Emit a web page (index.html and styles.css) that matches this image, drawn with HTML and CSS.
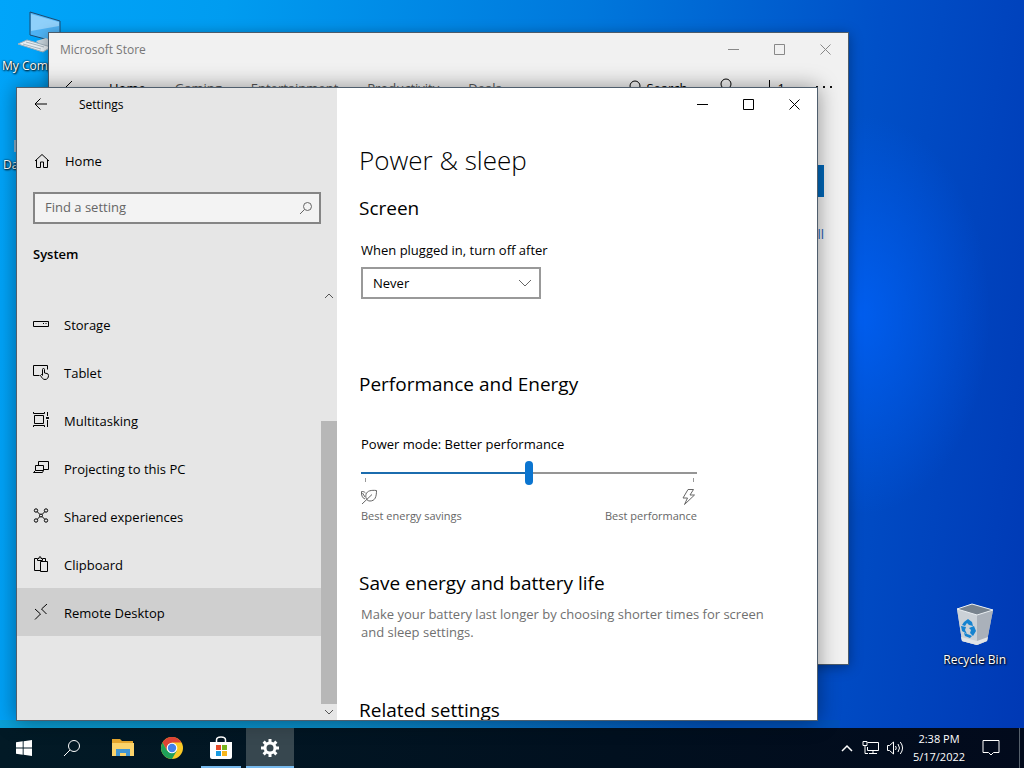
FILE: index.html
```html
<!DOCTYPE html>
<html lang="en">
<head>
<meta charset="UTF-8">
<meta name="viewport" content="width=device-width, initial-scale=1.0">
<title>Settings</title>
<link rel="stylesheet" href="styles.css">
</head>
<body>
<div class="desktop">

    <!-- desktop shortcuts -->
    <div class="shortcut my-computer">
        <svg width="48" height="44" viewBox="0 0 48 44">
            <path d="M14 1l30 9v22l-30-8z" fill="#4fb2f3" stroke="#1c4a70"/>
            <path d="M15 3l28 8v4L15 20z" fill="#8fd0fa"/>
            <path d="M20 30l10-3 8 4v6l-8 2z" fill="#c6d2da"/>
            <path d="M2 33l9-4 24 7-8 5z" fill="#e8eef2" stroke="#9fb0bc"/>
            <path d="M7 33l18 5M10 31l18 5" stroke="#a9b6bf"/>
        </svg>
        <span>My Computer</span>
    </div>
    <div class="shortcut data">
        <svg width="6" height="18" viewBox="0 0 6 18"><path d="M1 4h5v12H1z" fill="#8fb2cc"/></svg>
        <span>Data</span>
    </div>
    <div class="shortcut recycle">
        <svg width="40" height="44" viewBox="0 0 40 44">
            <path d="M2 6l15-5 21 6-6 31-10 4-15-4z" fill="#bfc6cd"/>
            <path d="M2 6l20 6v30L7 38z" fill="#cbd1d7"/>
            <path d="M22 12l16-5-6 31-10 4z" fill="#aab1ba"/>
            <path d="M2 6l15-5 21 6-16 5z" fill="#78838e" stroke="#e9eef2"/>
            <path d="M6 34l16 4 11-4-1 4-10 4-15-4z" fill="#e1e4e7"/>
            <g fill="#1583d0">
                <path d="M9 19l4-3 4 3 1 4-4-1-2-2-2 3-3-1z"/>
                <path d="M6 23l5 1-1 3 2 4-5-3z"/>
                <path d="M19 23l2 5-3 5-3-3 1-3-2-2z"/>
                <path d="M9 30l6 2 2 1-2 2-5-2z"/>
            </g>
        </svg>
        <span>Recycle Bin</span>
    </div>

    <!-- store window, behind -->
    <section class="window store">
        <header class="titlebar">
            <span class="store-title">Microsoft Store</span>
            <div class="controls">
                <button aria-label="Minimize"><svg width="11" height="11" viewBox="0 0 11 11"><path d="M0 5.500h11"/></svg></button>
                <button aria-label="Maximize"><svg width="11" height="11" viewBox="0 0 11 11"><path d="M.5.5h10v10H.5z"/></svg></button>
                <button aria-label="Close"><svg width="11" height="11" viewBox="0 0 11 11"><path d="M.5.5l10 10M10.500.5l-10 10"/></svg></button>
            </div>
        </header>
        <nav class="store-nav">
            <button class="store-back" aria-label="Back"><svg width="16" height="16" viewBox="0 0 16 16"><path d="M9 1L2 8l7 7M2 8h13"/></svg></button>
            <a href="#" class="on">Home</a>
            <a href="#">Gaming</a>
            <a href="#">Entertainment</a>
            <a href="#">Productivity</a>
            <a href="#">Deals</a>
            <div class="store-tools">
                <button><svg width="16" height="16" viewBox="0 0 16 16"><circle cx="9" cy="6" r="5"/><path d="M5 10l-4 5"/></svg>Search</button>
                <button aria-label="Account"><svg width="16" height="20" viewBox="0 0 16 20"><circle cx="8" cy="6" r="5"/><path d="M1 19c0-10 14-10 14 0"/></svg></button>
                <button aria-label="Downloads"><svg width="10" height="16" viewBox="0 0 10 16"><path d="M5.500 0v12M1 8l4 4 4-4"/></svg>1</button>
                <button aria-label="More"><svg width="18" height="4" viewBox="0 0 18 4"><path d="M1 0h2v2H1zM8 0h2v2H8zM15 0h2v2h-2z" fill="#111" stroke="none"/></svg></button>
            </div>
        </nav>
        <div class="store-body">
            <button class="store-buy">Get</button>
            <a href="#">Show all</a>
        </div>
    </section>

    <!-- settings window -->
    <section class="window settings">
        <aside class="sidebar">
            <header class="titlebar">
                <button class="back" aria-label="Back"><svg width="14" height="14" viewBox="0 0 14 14"><path d="M6.500 1.500L1 7l5.500 5.500M1 7h12"/></svg></button>
                <span>Settings</span>
            </header>
            <a href="#" class="item home">
                <svg width="16" height="16" viewBox="0 0 16 16"><path d="M1 8l7-6.500L15 8M2.500 7v7.500h4V9h3v5.500h4V7"/></svg>
                Home
            </a>
            <form class="search">
                <input type="text" placeholder="Find a setting" aria-label="Find a setting">
                <svg width="14" height="14" viewBox="0 0 14 14"><circle cx="8.500" cy="5.500" r="4"/><path d="M5.500 8.500L1 13"/></svg>
            </form>
            <h2>System</h2>
            <div class="scroller">
                <nav class="list">
                    <a href="#" class="item">
                        <svg width="16" height="16" viewBox="0 0 16 16"><path d="M.5 5.500h15v5H.5z"/><path d="M10 7.500h1M12.500 7.500h1"/></svg>
                        Storage
                    </a>
                    <a href="#" class="item">
                        <svg width="16" height="16" viewBox="0 0 16 16"><path d="M6.500 11.500h-6v-10h14v4M9.500 11V5.500q0-1 1-1t1 1V9l2.500.5q1.500.3 1.500 2c0 2-1 4-3.500 4-2 0-3-1.500-4.500-4l1-1 1.500 1"/></svg>
                        Tablet
                    </a>
                    <a href="#" class="item">
                        <svg width="16" height="16" viewBox="0 0 16 16"><path d="M1.500 3.500h9v8h-9zM.5 0v1.500h11V0M.5 15v-1.500h11V15M14.500 0v4M14.500 8v7"/><path d="M13 5h3v2h-3z" fill="#111" stroke="none"/></svg>
                        Multitasking
                    </a>
                    <a href="#" class="item">
                        <svg width="16" height="16" viewBox="0 0 16 16"><path d="M5.500 6V1.500h10v8H11M2.500 10.500v-5h8v5M2.500 10.500h8l-1 2h-9z"/></svg>
                        Projecting to this PC
                    </a>
                    <a href="#" class="item">
                        <svg width="16" height="16" viewBox="0 0 16 16"><circle cx="3" cy="2.500" r="1.700"/><circle cx="13" cy="2.500" r="1.700"/><circle cx="3" cy="12.500" r="1.700"/><circle cx="13" cy="12.500" r="1.700"/><circle cx="8" cy="7.500" r="1.500"/><path d="M4.200 3.700L7 6.500M11.800 3.700L9 6.500M4.200 11.300L7 8.500M11.800 11.300L9 8.500"/></svg>
                        Shared experiences
                    </a>
                    <a href="#" class="item">
                        <svg width="16" height="16" viewBox="0 0 16 16"><path d="M7 14.500H1.500v-12H4M10 2.500h2.500V5M4.500 4.500v-2h1.500q0-2 1-2t1 2h1.500v2zM7.500 5.500h7v10h-7z"/></svg>
                        Clipboard
                    </a>
                    <a href="#" class="item current">
                        <svg width="16" height="16" viewBox="0 0 16 16"><path d="M2 5l5.500 5L2 15.500M14 0L8.500 5l5 5"/></svg>
                        Remote Desktop
                    </a>
                </nav>
                <div class="scrollbar">
                    <svg width="10" height="6" viewBox="0 0 10 6"><path d="M1 5l4-4 4 4"/></svg>
                    <div class="thumb"></div>
                    <svg width="10" height="6" viewBox="0 0 10 6"><path d="M1 1l4 4 4-4"/></svg>
                </div>
            </div>
        </aside>

        <main class="content">
            <header class="titlebar">
                <div class="controls">
                    <button aria-label="Minimize"><svg width="11" height="11" viewBox="0 0 11 11"><path d="M0 5.500h11"/></svg></button>
                    <button aria-label="Maximize"><svg width="11" height="11" viewBox="0 0 11 11"><path d="M.5.5h10v10H.5z"/></svg></button>
                    <button aria-label="Close"><svg width="11" height="11" viewBox="0 0 11 11"><path d="M.5.5l10 10M10.500.5l-10 10"/></svg></button>
                </div>
            </header>
            <div class="page">
                <h1>Power &amp; sleep</h1>

                <section class="group screen">
                    <h2>Screen</h2>
                    <div class="fields">
                        <label for="screen-off">When plugged in, turn off after</label>
                        <div class="dropdown">
                            <select id="screen-off">
                                <option>Never</option>
                            </select>
                            <svg width="14" height="8" viewBox="0 0 14 8"><path d="M1 1l6 6 6-6"/></svg>
                        </div>
                    </div>
                </section>

                <section class="group energy">
                    <h2>Performance and Energy</h2>
                    <div class="fields">
                        <label for="power-mode">Power mode: Better performance</label>
                        <input type="range" id="power-mode" min="0" max="2" value="1">
                        <div class="ticks"><i></i><i></i></div>
                        <div class="ends">
                            <div>
                                <svg width="16" height="16" viewBox="0 0 16 16"><path d="M15.500 1.500c-5-.5-9.500 0-10.500 4-.7 3 .5 6.500 4 6.500 5 0 6.500-4 6.500-10.500zM1 15L11 5.500M4 10C1 9 .3 6 .5 2.500c2 0 3 .3 4 1.500M1.500 4L4 8"/></svg>
                                <span>Best energy savings</span>
                            </div>
                            <div class="right">
                                <svg width="16" height="16" viewBox="0 0 16 16"><path d="M7 .5h5.500L9 6h4.500L3.500 15.500l3-6.500H2z"/></svg>
                                <span>Best performance</span>
                            </div>
                        </div>
                    </div>
                </section>

                <section class="group save">
                    <h2>Save energy and battery life</h2>
                    <div class="fields">
                        <p>Make your battery last longer by choosing shorter times for screen and sleep settings.</p>
                    </div>
                </section>

                <section class="group">
                    <h2>Related settings</h2>
                </section>
            </div>
        </main>
    </section>
</div>

<footer class="taskbar">
    <button aria-label="Start"><svg width="16" height="16" viewBox="0 0 16 16" fill="#fff"><path d="M0 2.300L6.700 1.300v6.200H0zM7.600 1.200L16 0v7.500H7.600zM0 8.400h6.700v6.300L0 13.700zM7.600 8.400H16V16l-8.400-1.200z"/></svg></button>
    <button aria-label="Search"><svg class="line" width="18" height="18" viewBox="0 0 18 18"><circle cx="11" cy="7" r="5.500"/><path d="M7 11l-6 6"/></svg></button>
    <div class="apps">
        <button aria-label="File Explorer"><svg width="22" height="18" viewBox="0 0 22 18">
            <path d="M0 0h8l2 2h11v15H0z" fill="#e6a72e"/>
            <path d="M0 4h22v13H0z" fill="#fcd46b"/>
            <path d="M4 17v-7h14v7h-4v-3H8v3z" fill="#4296d3"/>
        </svg></button>
        <button aria-label="Chrome"><svg width="22" height="22" viewBox="0 0 22 22">
            <circle cx="11" cy="11" r="11" fill="#fbc926"/>
            <path d="M1.500 5.500A11 11 0 0 1 20.500 5.500H11L6.200 13.700z" fill="#df4437"/>
            <path d="M1.500 5.500A11 11 0 0 0 11 22l4.800-8.200H6.200z" fill="#1fa05a"/>
            <circle cx="11" cy="11" r="5.300" fill="#fff"/>
            <circle cx="11" cy="11" r="4.200" fill="#4381ea"/>
        </svg></button>
        <button class="open" aria-label="Microsoft Store"><svg width="24" height="24" viewBox="0 0 24 24">
            <path d="M7.500 7V4q0-3 4.500-3t4.500 3v3" fill="none" stroke="#fff" stroke-width="1.500"/>
            <path d="M1 6h22v15q0 2-2 2H3q-2 0-2-2z" fill="#fff"/>
            <path d="M7 9h5v5H7z" fill="#e64a28"/><path d="M13 9h5v5h-5z" fill="#78b51e"/>
            <path d="M7 15h5v5H7z" fill="#1a9be0"/><path d="M13 15h5v5h-5z" fill="#f6b51a"/>
        </svg></button>
        <button class="open active" aria-label="Settings"><svg width="18" height="18" viewBox="0 0 18 18">
            <circle cx="9" cy="9" r="5" fill="none" stroke="#fff" stroke-width="3"/>
            <path d="M9 0v4M9 14v4M0 9h4M14 9h4M2.600 2.600l3 3M12.400 12.400l3 3M15.400 2.600l-3 3M5.600 12.400l-3 3" stroke="#fff" stroke-width="3"/>
            <circle cx="9" cy="9" r="3" fill="#37474f"/>
        </svg></button>
    </div>
    <div class="tray">
        <button aria-label="Show hidden icons"><svg class="line" width="12" height="8" viewBox="0 0 12 8"><path d="M1 7l5-5 5 5" stroke-width="1.500"/></svg></button>
        <button aria-label="Network"><svg class="line" width="18" height="16" viewBox="0 0 18 16"><path d="M5.500 2.500h11v8h-11V7M1 1.500h4v4H1zM3 5.500v8h3M11 10.500v3M7 13.500h8"/></svg></button>
        <button aria-label="Volume"><svg class="line" width="18" height="16" viewBox="0 0 18 16"><path d="M1.500 5.500h2l4-3.500v12l-4-3.500h-2zM9.500 6q1.500 2 0 4M12 4q3 4 0 8M14.300 2q4.500 6 0 12"/></svg></button>
        <div class="clock"><span>2:38 PM</span><span>5/17/2022</span></div>
        <button class="notify" aria-label="Notifications"><svg class="line" width="18" height="18" viewBox="0 0 18 18"><path d="M1 1.500h16v12h-5.500L9 16l-2.500-2.500H1z"/></svg></button>
        <div class="peek"></div>
    </div>
</footer>
</body>
</html>
```
FILE: styles.css
```css
*{
    box-sizing: border-box;
}
body{
    margin: 0;
    height: 100vh;
    display: flex;
    flex-direction: column;
    overflow: hidden;
    font-family: "Open Sans", "Noto Sans", sans-serif;
    font-size: 13px;
    line-height: 18px;
    color: #000;
    background:
        radial-gradient(ellipse 130px 200px at 84% 41%, rgba(0,100,255,.7), transparent),
        linear-gradient(98deg, #00a5fa 0%, #009cf0 20%, #0078dc 52%, #0050c8 78%, #0038b4 100%);
}
h1, h2, p{
    margin: 0;
}
a{
    color: inherit;
    text-decoration: none;
}
button{
    padding: 0;
    border: 0;
    background: none;
    font: inherit;
    color: inherit;
    display: flex;
    align-items: center;
    justify-content: center;
}
svg{
    flex: none;
}

/* desktop */
.desktop{
    position: relative;
    flex: 1;
    background: linear-gradient(to right, #0a9fd6, #0a8cc8 40%, #0050b8 85%) bottom / 100% 8px no-repeat;
    background-size: 82% 8px;
    background-position: left bottom;
}
.shortcut{
    position: absolute;
    display: flex;
    flex-direction: column;
    align-items: center;
    gap: 2px;
    font-size: 12px;
    color: #fff;
    text-shadow: 1px 1px 2px #000, 0 0 2px #000;
    white-space: nowrap;
}
.my-computer{
    left: 2px;
    top: 11px;
}
.data{
    left: 3px;
    top: 136px;
}
.recycle{
    right: 18px;
    bottom: 59px;
    gap: 4px;
}

/* windows */
.window{
    position: absolute;
    overflow: hidden;
    border: 1px solid rgba(20,40,60,.75);
}
.window svg{
    fill: none;
    stroke: #000;
}
.titlebar{
    display: flex;
    align-items: center;
    height: 32px;
    font-size: 12px;
}
.titlebar span{
    padding-top: 2px;
}
.controls{
    display: flex;
    margin-left: auto;
}
.controls button{
    width: 46px;
    height: 32px;
}

.store{
    left: 48px;
    top: 32px;
    right: 175px;
    bottom: 63px;
    background: #f1f1f1;
    box-shadow: 0 2px 12px rgba(0,0,0,.35);
}
.store-title{
    padding-left: 11px;
    color: #777;
}
.store .controls svg{
    stroke: #888;
}
.store-nav{
    display: flex;
    align-items: center;
    gap: 29px;
    height: 46px;
    padding: 0 15px 0 14px;
    color: #555;
}
.store-nav .on{
    color: #000;
}
.store-back{
    margin-right: 1px;
}
.store-tools{
    display: flex;
    align-items: center;
    gap: 30px;
    margin-left: auto;
    color: #000;
}
.store-tools button{
    gap: 4px;
}
.store-body{
    display: flex;
    flex-direction: column;
    align-items: flex-end;
    gap: 28px;
    padding: 54px 24px;
    color: #1c5fb4;
}
.store-buy{
    width: 96px;
    height: 32px;
    background: #0067b8;
    color: #fff;
}

.settings{
    left: 16px;
    top: 87px;
    right: 206px;
    bottom: 7px;
    display: flex;
    background: #fff;
    box-shadow: 0 0 20px rgba(0,0,0,.4);
}

/* sidebar */
.sidebar{
    width: 320px;
    flex: none;
    display: flex;
    flex-direction: column;
    background: #e6e6e6;
}
.back{
    width: 48px;
    height: 32px;
    margin-right: 14px;
}
.item{
    display: flex;
    align-items: center;
    gap: 15px;
    height: 48px;
    padding-left: 16px;
}
.list .item{
    padding-top: 2px;
}
.home{
    margin: 17px 0 7px;
    padding-left: 17px;
}
.search{
    position: relative;
    margin: 0 16px;
}
.search input{
    display: block;
    width: 100%;
    height: 32px;
    padding: 0 30px 2px 10px;
    border: 2px solid #858585;
    border-radius: 0;
    background: #f3f3f3;
    font: inherit;
}
.search input::placeholder{
    color: #666;
}
.search svg{
    position: absolute;
    right: 8px;
    top: 9px;
    stroke: #666;
}
.sidebar h2{
    padding: 21px 16px 25px;
    font-size: 13px;
    line-height: 18px;
    font-weight: 600;
}
.scroller{
    flex: 1;
    display: flex;
    min-height: 0;
}
.list{
    flex: 1;
    padding-top: 12px;
}
.list svg{
    margin-bottom: 2px;
}
.current{
    background: #cfcfcf;
}
.scrollbar{
    width: 16px;
    display: flex;
    flex-direction: column;
    align-items: center;
    justify-content: space-between;
    padding: 5px 0;
}
.scrollbar svg{
    stroke: #555;
}
.thumb{
    width: 100%;
    height: 67%;
    margin: auto 0 5px;
    background: #b7b7b7;
}

/* power & sleep page */
.content{
    flex: 1;
    min-width: 0;
}
.page{
    padding: 22px 36px 22px 22px;
}
h1{
    margin-bottom: 18px;
    font-size: 26px;
    line-height: 36px;
    font-weight: 300;
}
.group h2{
    font-size: 19px;
    line-height: 24px;
    font-weight: 400;
}
.fields{
    display: flex;
    flex-direction: column;
    align-items: flex-start;
    padding-left: 2px;
}
.screen{
    margin-bottom: 73px;
}
.screen label{
    margin: 21px 0 8px;
}
.dropdown{
    position: relative;
}
.dropdown select{
    appearance: none;
    display: block;
    width: 180px;
    height: 32px;
    padding: 0 30px 0 10px;
    border: 2px solid #999;
    border-radius: 0;
    background: #fff;
    font: inherit;
    color: inherit;
}
.dropdown svg{
    position: absolute;
    right: 9px;
    top: 12px;
    stroke: #666;
    pointer-events: none;
}
.energy{
    max-width: 338px;
    margin-bottom: 46px;
}
.energy label{
    margin: 39px 0 8px;
}
.energy input{
    appearance: none;
    display: block;
    width: 100%;
    height: 24px;
    margin: 0;
    background: linear-gradient(to right, #1b6cae 50%, #959595 50%) center / 100% 2px no-repeat;
}
.energy input::-webkit-slider-thumb{
    appearance: none;
    width: 8px;
    height: 24px;
    border-radius: 4px;
    background: #0b75d0;
}
.energy input::-moz-range-thumb{
    width: 8px;
    height: 24px;
    border: 0;
    border-radius: 4px;
    background: #0b75d0;
}
.ticks{
    display: flex;
    justify-content: space-between;
    width: 100%;
    height: 4px;
    margin-top: -7px;
    padding: 0 3px 0 4px;
}
.ticks i{
    width: 1px;
    background: #999;
}
.ends{
    display: flex;
    justify-content: space-between;
    width: 100%;
    margin-top: 7px;
    font-size: 11px;
    color: #666;
}
.ends div{
    display: flex;
    flex-direction: column;
    gap: 2px;
}
.ends .right{
    align-items: flex-end;
}
.ends svg{
    stroke: #666;
}
.save{
    margin-bottom: 57px;
}
.save p{
    margin-top: 10px;
    color: #707070;
}

/* taskbar */
.taskbar{
    display: flex;
    height: 40px;
    color: #fff;
    background: linear-gradient(to right, #021a26, #01101f 60%, #020a1c);
}
.taskbar > button, .apps button{
    width: 48px;
    height: 40px;
}
.line{
    fill: none;
    stroke: #fff;
}
.apps{
    display: flex;
    gap: 1px;
    margin-left: 3px;
}
.apps .open{
    background: linear-gradient(#76b9ed, #76b9ed) bottom / 40px 2px no-repeat;
}
.apps .active{
    background: linear-gradient(#76b9ed, #76b9ed) bottom / 100% 2px no-repeat, #37474f;
}
.tray{
    display: flex;
    align-items: center;
    margin-left: auto;
}
.tray button{
    width: 24px;
    height: 40px;
}
.clock{
    display: flex;
    flex-direction: column;
    align-items: center;
    width: 64px;
    font-size: 11px;
}
.tray .notify{
    width: 40px;
}
.peek{
    width: 5px;
    height: 40px;
    margin-left: 8px;
    border-left: 1px solid #56606c;
}
```
